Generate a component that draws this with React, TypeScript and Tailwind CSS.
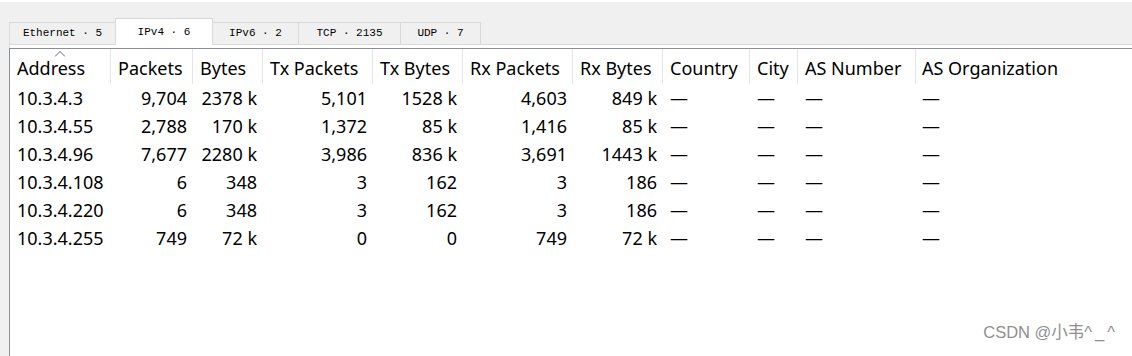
import React from 'react';

type Column = { label: string; width: string; right: boolean };

const columns: Column[] = [
  { label: 'Address', width: 'w-[101px]', right: false },
  { label: 'Packets', width: 'w-[82px]', right: true },
  { label: 'Bytes', width: 'w-[70px]', right: true },
  { label: 'Tx Packets', width: 'w-[110px]', right: true },
  { label: 'Tx Bytes', width: 'w-[90px]', right: true },
  { label: 'Rx Packets', width: 'w-[110px]', right: true },
  { label: 'Rx Bytes', width: 'w-[90px]', right: true },
  { label: 'Country', width: 'w-[87px]', right: false },
  { label: 'City', width: 'w-[48px]', right: false },
  { label: 'AS Number', width: 'w-[118px]', right: false },
];

const rows: string[][] = [
  ['10.3.4.3', '9,704', '2378 k', '5,101', '1528 k', '4,603', '849 k'],
  ['10.3.4.55', '2,788', '170 k', '1,372', '85 k', '1,416', '85 k'],
  ['10.3.4.96', '7,677', '2280 k', '3,986', '836 k', '3,691', '1443 k'],
  ['10.3.4.108', '6', '348', '3', '162', '3', '186'],
  ['10.3.4.220', '6', '348', '3', '162', '3', '186'],
  ['10.3.4.255', '749', '72 k', '0', '0', '749', '72 k'],
];

const tabs = [
  { label: 'Ethernet · 5', cls: 'w-[106px] h-[22px] border-t border-l border-[#d9d9d9]' },
  { label: 'IPv4 · 6', cls: 'w-[98px] h-[27px] -mb-px relative z-10 bg-white border-t border-l border-r border-[#d9d9d9]' },
  { label: 'IPv6 · 2', cls: 'w-[86px] h-[22px] border-t border-r border-[#d9d9d9]' },
  { label: 'TCP · 2135', cls: 'w-[102px] h-[22px] border-t border-r border-[#d9d9d9]' },
  { label: 'UDP · 7', cls: 'w-[80px] h-[22px] border-t border-r border-[#d9d9d9]' },
];

const App: React.FC = () => {
  return (
    <div className="relative w-[1132px] h-[356px] overflow-hidden bg-[#f0f0f0] border-t-2 border-white flex flex-col">
      {/* tab strip */}
      <div className="flex items-end pl-[9px] pt-[16px]">
        {tabs.map((t) => (
          <div
            key={t.label}
            className={`${t.cls} flex items-center justify-center whitespace-pre text-[11px] text-black font-['Liberation_Mono',monospace]`}
          >
            {t.label}
          </div>
        ))}
      </div>

      {/* tab page */}
      <div className="flex-1 ml-[9px] bg-white border-t border-l border-[#d9d9d9]">
        <div className="mt-[3px] -ml-px h-full border-t border-l border-[#8a8e96] font-['Noto_Sans',sans-serif] text-[18px] text-black">
          <div className="flex h-[35px]">
            {columns.map((c, i) => (
              <div
                key={c.label}
                className={`relative shrink-0 ${c.width} border-r border-[#e5e5e5] pl-[7px] pt-[3px] leading-[32px] whitespace-nowrap`}
              >
                {i === 0 && (
                  <svg className="absolute top-[2px] left-1/2 -translate-x-1/2" width="11" height="6" viewBox="0 0 11 6">
                    <polyline points="0.5,5.5 5.5,0.5 10.5,5.5" fill="none" stroke="#6b6b6b" strokeWidth="1" />
                  </svg>
                )}
                {c.label}
              </div>
            ))}
            <div className="flex-1 pl-[6px] pt-[3px] leading-[32px] whitespace-nowrap">AS Organization</div>
          </div>

          {rows.map((r) => (
            <div key={r[0]} className="flex h-[28px] leading-[28px]">
              {columns.map((c, i) => {
                const value = i < r.length ? r[i] : '—';
                return (
                  <div
                    key={c.label}
                    className={`shrink-0 ${c.width} whitespace-nowrap ${c.right ? 'text-right pr-[6px]' : 'pl-[7px]'}`}
                  >
                    {value}
                  </div>
                );
              })}
              <div className="flex-1 pl-[6px]">—</div>
            </div>
          ))}
        </div>
      </div>

      {/* watermark */}
      <div className="absolute right-[14px] bottom-[11px] text-[16.5px] text-[#8f8f8f] font-['Liberation_Sans','Noto_Sans_CJK_SC',sans-serif] whitespace-nowrap">
        CSDN @<span className="font-['Noto_Sans_CJK_SC',sans-serif]">小韦</span>
        <span className="tracking-[3px]">^_^</span>
      </div>
    </div>
  );
};

export default App;
